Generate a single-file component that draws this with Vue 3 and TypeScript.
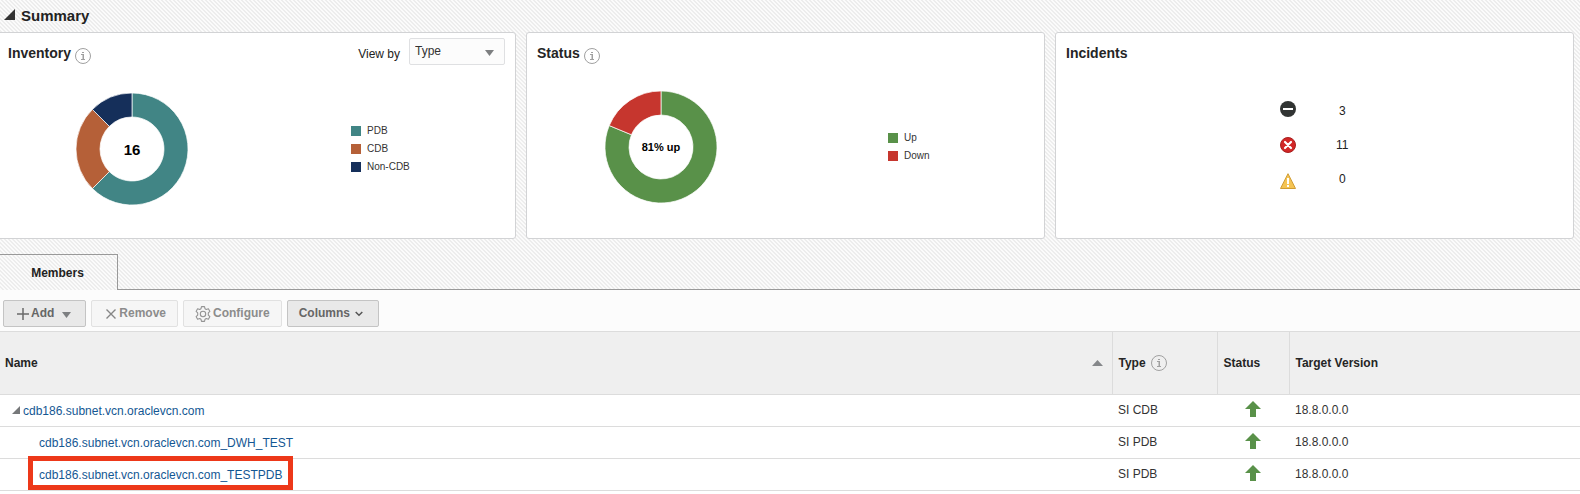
<script setup lang="ts">
import { ref } from 'vue'

interface Slice { label: string; value: number; color: string }
interface Member { name: string; type: string; version: string; level: number; marked?: boolean }

const inventory: Slice[] = [
  { label: 'PDB', value: 10, color: '#418585' },
  { label: 'CDB', value: 4, color: '#b56038' },
  { label: 'Non-CDB', value: 2, color: '#152f5a' },
]
const status: Slice[] = [
  { label: 'Up', value: 13, color: '#599149' },
  { label: 'Down', value: 3, color: '#c6362e' },
]

function arcs(slices: Slice[]): { d: string; color: string }[] {
  const total = slices.reduce((sum, s) => sum + s.value, 0)
  let start = 0
  const at = (fraction: number, radius: number): string => {
    const angle = fraction * 2 * Math.PI
    return `${(56 + radius * Math.sin(angle)).toFixed(2)} ${(56 - radius * Math.cos(angle)).toFixed(2)}`
  }
  return slices.map((s) => {
    const end = start + s.value / total
    const large = end - start > 0.5 ? 1 : 0
    const d = `M${at(start, 56)}A56 56 0 ${large} 1 ${at(end, 56)}L${at(end, 32)}A32 32 0 ${large} 0 ${at(start, 32)}Z`
    start = end
    return { d, color: s.color }
  })
}

const charts = { inventory: arcs(inventory), status: arcs(status) }
const viewBy = ref('Type')

const members: Member[] = [
  { name: 'cdb186.subnet.vcn.oraclevcn.com', type: 'SI CDB', version: '18.8.0.0.0', level: 0 },
  { name: 'cdb186.subnet.vcn.oraclevcn.com_DWH_TEST', type: 'SI PDB', version: '18.8.0.0.0', level: 1 },
  { name: 'cdb186.subnet.vcn.oraclevcn.com_TESTPDB', type: 'SI PDB', version: '18.8.0.0.0', level: 1, marked: true },
]
</script>

<template>
  <main class="page">
    <header class="summary-head">
      <button class="disclose" type="button" aria-label="Collapse summary">
        <svg width="11" height="11" viewBox="0 0 11 11"><path d="M11 0V11H0Z" fill="#333" /></svg>
      </button>
      <h1>Summary</h1>
    </header>

    <div class="cards">
      <section class="card">
        <div class="card-head">
          <h2>Inventory</h2>
          <button class="info" type="button" aria-label="About inventory">
            <svg width="16" height="16" viewBox="0 0 16 16"><circle cx="8" cy="8" r="7.5" fill="none" stroke="#a0a0a0" /><path d="M7 4h2v1H7zM6 6h3v5h1v1H6v-1h1.500V7H6z" fill="#a0a0a0" /></svg>
          </button>
          <div class="view-by">
            <label for="view-by">View by</label>
            <div class="select-box">
              <select id="view-by" v-model="viewBy"><option>Type</option></select>
              <svg class="caret" width="9" height="6" viewBox="0 0 9 6"><path d="M0 0H9L4.500 6Z" fill="#7d7f81" /></svg>
            </div>
          </div>
        </div>
        <div class="chart-row inventory-row">
          <div class="donut">
            <svg width="112" height="112" viewBox="0 0 112 112">
              <path v-for="a in charts.inventory" :key="a.color" :d="a.d" :fill="a.color" stroke="#fff" stroke-width="0.700" />
            </svg>
            <span class="total">16</span>
          </div>
          <ul class="legend">
            <li v-for="s in inventory" :key="s.label"><i :style="{ background: s.color }"></i>{{ s.label }}</li>
          </ul>
        </div>
      </section>

      <section class="card">
        <div class="card-head">
          <h2>Status</h2>
          <button class="info" type="button" aria-label="About status">
            <svg width="16" height="16" viewBox="0 0 16 16"><circle cx="8" cy="8" r="7.5" fill="none" stroke="#a0a0a0" /><path d="M7 4h2v1H7zM6 6h3v5h1v1H6v-1h1.500V7H6z" fill="#a0a0a0" /></svg>
          </button>
        </div>
        <div class="chart-row status-row">
          <div class="donut">
            <svg width="112" height="112" viewBox="0 0 112 112">
              <path v-for="a in charts.status" :key="a.color" :d="a.d" :fill="a.color" stroke="#fff" stroke-width="0.700" />
            </svg>
            <span class="total small">81% up</span>
          </div>
          <ul class="legend">
            <li v-for="s in status" :key="s.label"><i :style="{ background: s.color }"></i>{{ s.label }}</li>
          </ul>
        </div>
      </section>

      <section class="card">
        <div class="card-head"><h2>Incidents</h2></div>
        <div class="incidents">
          <ul class="icons">
            <li><svg width="16" height="16" viewBox="0 0 16 16" role="img" aria-label="Fatal"><circle cx="8" cy="8" r="8" fill="#313433" /><path d="M3 7h10v2H3z" fill="#fff" /></svg></li>
            <li><svg width="16" height="16" viewBox="0 0 16 16" role="img" aria-label="Critical"><circle cx="8" cy="8" r="7.500" fill="#d22626" stroke="#a8201f" /><path d="M5 5l6 6M11 5l-6 6" stroke="#fff" stroke-width="2.200" stroke-linecap="round" /></svg></li>
            <li><svg width="16" height="16" viewBox="0 0 16 16" role="img" aria-label="Warning"><path d="M8 .7L15.500 15.500H.5Z" fill="#f5c453" stroke="#cf9c35" stroke-linejoin="round" /><path d="M7 5h2v6H7zM7 12h2v2H7z" fill="#fff" /></svg></li>
          </ul>
          <ul class="counts"><li>3</li><li>11</li><li>0</li></ul>
        </div>
      </section>
    </div>

    <nav class="tabs" role="tablist">
      <button class="tab" type="button" role="tab" aria-selected="true">Members</button>
      <div class="tab-line"></div>
    </nav>

    <div class="toolbar">
      <button class="btn add" type="button">
        <svg width="12" height="12" viewBox="0 0 12 12"><path d="M6 0V12M0 6H12" stroke="#6a6a6a" stroke-width="1.500" /></svg>
        <span>Add</span>
        <svg class="drop" width="9" height="6" viewBox="0 0 9 6"><path d="M0 0H9L4.500 6Z" fill="#7d7f81" /></svg>
      </button>
      <button class="btn remove" type="button" disabled>
        <svg width="10" height="10" viewBox="0 0 10 10"><path d="M.5 .5L9.500 9.500M9.500 .5L.5 9.500" stroke="#868686" stroke-width="1.400" /></svg>
        <span>Remove</span>
      </button>
      <button class="btn configure" type="button" disabled>
        <svg width="16" height="16" viewBox="0 0 16 16" fill="none" stroke="#949494" stroke-width="1.100"><path d="M6.500 .6h3l.5 2.100 1.300.8 2.100-.7 1.500 2.600-1.600 1.500v2.200l1.600 1.500-1.500 2.600-2.100-.7-1.300.8-.5 2.100h-3l-.5-2.100-1.300-.8-2.100.7-1.500-2.600 1.600-1.500V6.900L1.100 5.400l1.500-2.600 2.100.7 1.300-.8z" stroke-linejoin="round" /><circle cx="8" cy="8" r="2.700" /></svg>
        <span>Configure</span>
      </button>
      <button class="btn columns" type="button">
        <span>Columns</span>
        <svg width="8" height="6" viewBox="0 0 8 6"><path d="M.7 1L4 4.300 7.300 1" fill="none" stroke="#555" stroke-width="1.500" /></svg>
      </button>
    </div>

    <table class="members">
      <colgroup><col /><col class="c-type" /><col class="c-status" /><col class="c-version" /></colgroup>
      <thead>
        <tr>
          <th aria-sort="ascending"><div class="cell spread">Name<svg width="11" height="6" viewBox="0 0 11 6"><path d="M0 6H11L5.500 0Z" fill="#85878a" /></svg></div></th>
          <th>
            <div class="cell">Type
              <svg width="16" height="16" viewBox="0 0 16 16"><circle cx="8" cy="8" r="7.5" fill="none" stroke="#a0a0a0" /><path d="M7 4h2v1H7zM6 6h3v5h1v1H6v-1h1.500V7H6z" fill="#a0a0a0" /></svg>
            </div>
          </th>
          <th>Status</th>
          <th>Target Version</th>
        </tr>
      </thead>
      <tbody>
        <tr v-for="m in members" :key="m.name">
          <td>
            <div :class="['name', m.level ? 'child' : 'root']">
              <svg v-if="!m.level" width="8" height="8" viewBox="0 0 8 8"><path d="M8 0V8H0Z" fill="#76787a" /></svg>
              <a href="#" :class="{ marked: m.marked }">{{ m.name }}</a>
            </div>
          </td>
          <td>{{ m.type }}</td>
          <td class="state"><svg width="16" height="16" viewBox="0 0 16 16" role="img" aria-label="Up"><path d="M8 0L16 8H11V16H5V8H0Z" fill="#599149" /></svg></td>
          <td>{{ m.version }}</td>
        </tr>
      </tbody>
    </table>
  </main>
</template>

<style>
body { background: #fff; }
</style>

<style scoped>
* { box-sizing: border-box; }
.page {
  overflow: hidden;
  font: 12px/16px "Liberation Sans", Arial, sans-serif;
  color: #333;
  background: linear-gradient(45deg, #ededed 25%, #fbfbfb 25% 50%, #ededed 50% 75%, #fbfbfb 75%) 0 0 / 4px 4px;
}
h1, h2, ul { margin: 0; padding: 0; list-style: none; }
button { font: inherit; color: inherit; }
svg { display: block; flex: none; }
.summary-head { display: flex; align-items: center; height: 32px; padding-left: 4px; gap: 6px; }
.summary-head h1 { font-size: 15px; line-height: 20px; color: #222; }
.disclose, .info { border: 0; padding: 0; background: none; }
.disclose { margin-bottom: 3px; }
.cards { display: grid; grid-template-columns: repeat(3, 1fr); gap: 10px; margin: 0 6px 0 -3px; }
.card { min-height: 207px; border: 1px solid #d2d3d5; border-radius: 3px; background: #fff; }
.card-head { display: flex; align-items: center; height: 40px; padding: 0 10px; gap: 4px; }
.card-head h2 { font-size: 14px; line-height: 18px; color: #252525; }
.info { margin-top: 6px; }
.view-by { display: flex; align-items: center; gap: 9px; margin: 0 0 3px auto; color: #222; }
.view-by label { margin-top: 4px; }
.select-box { position: relative; }
.select-box select {
  display: block; appearance: none; width: 96px; height: 27px; padding: 0 5px 1px;
  border: 1px solid #dfe0e2; border-radius: 2px; background: #fcfcfc; color: #333; font: inherit;
}
.caret { position: absolute; right: 11px; top: 12px; pointer-events: none; }
.chart-row { display: flex; }
.inventory-row { padding: 20px 0 0 78px; }
.status-row { padding: 18px 0 0 78px; }
.donut { position: relative; width: 112px; height: 112px; }
.total { position: absolute; inset: 2px 0 0; display: grid; place-items: center; font-size: 15px; font-weight: bold; color: #000; }
.total.small { inset: 0; font-size: 11px; }
.legend { display: flex; flex-direction: column; font-size: 10px; line-height: 18px; }
.inventory-row .legend { margin: 29px 0 0 163px; }
.status-row .legend { margin: 38px 0 0 171px; }
.legend li { display: flex; align-items: center; gap: 6px; }
.legend i { width: 10px; height: 10px; }
.incidents { display: flex; padding: 28px 0 0 224px; gap: 40px; color: #222; }
.icons { display: grid; gap: 20px; align-content: start; }
.counts { margin-top: -7px; line-height: 34px; text-align: center; }
.tabs { display: flex; margin-top: 15px; height: 36px; }
.tab { width: 118px; border: 1px solid #999; border-width: 1px 1px 0 0; background: none; padding: 0 2px 0 0; font-weight: bold; color: #222; }
.tab-line { flex: 1; border-bottom: 1px solid #999; }
.toolbar { display: flex; align-items: center; gap: 5px; height: 42px; padding: 5px 3px 0; background: #fcfcfc; border-bottom: 1px solid #dcdcdc; }
.btn { display: flex; align-items: center; height: 27px; border: 1px solid #c4c4c4; border-radius: 2px; background: #e9e9e9; color: #666; font-weight: bold; gap: 2px; }
.btn svg { margin-top: 2px; }
.btn:disabled { border-color: #e1e1e1; background: #f6f6f6; color: #8c8c8c; }
.add { padding: 0 14px 0 13px; }
.btn .drop { margin: 4px 0 0 6px; }
.remove { padding: 0 11px 0 14px; gap: 3px; }
.configure { padding: 0 11px; }
.columns { padding: 0 15px 0 11px; gap: 5px; }
.members { width: 100%; border-collapse: collapse; table-layout: fixed; background: #fff; }
.c-type { width: 105px; }
.c-status { width: 72px; }
.c-version { width: 291px; }
th { height: 62px; padding: 0 6px; text-align: left; color: #252525; background: #efefef; border-bottom: 1px solid #dcdcdc; }
th + th { border-left: 1px solid #dcdcdc; }
th:first-child { padding: 0 9px 0 5px; }
td { height: 32px; padding: 0 6px; border-bottom: 1px solid #dcdcdc; }
td:first-child { padding: 0; }
.cell { display: flex; align-items: center; gap: 5px; }
.spread { justify-content: space-between; }
.name { display: flex; align-items: center; gap: 3px; margin-top: 2px; }
.root { padding-left: 12px; }
.root svg { margin-bottom: 3px; }
.child { padding-left: 39px; }
.name a { position: relative; color: #145793; text-decoration: none; }
.marked::after { content: ""; position: absolute; inset: -11px -11px -7px; border: 5px solid #ed3819; }
.state svg { margin: 0 auto 2px; }
</style>
